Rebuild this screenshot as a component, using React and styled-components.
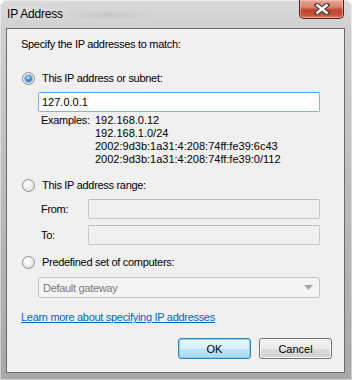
import React from "react";
import styled, { createGlobalStyle } from "styled-components";

const GlobalStyle = createGlobalStyle`
  html, body {
    margin: 0;
    padding: 0;
    background: #ffffff;
  }
  body {
    font-family: "Liberation Sans", Arial, sans-serif;
    font-size: 11px;
    letter-spacing: -0.3px;
    color: #000000;
  }
`;

function Radio({ checked, label }) {
  return (
    <RadioRow>
      <RadioCircle>{checked && <RadioDot />}</RadioCircle>
      <span>{label}</span>
    </RadioRow>
  );
}

export default function App() {
  return (
    <>
      <GlobalStyle />
      <Window>
        <TitleBar>
          <Title>IP Address</Title>
          <CloseButton>
            <svg width="16" height="12" viewBox="0 0 16 12">
              <path d="M3 2 L13 10 M13 2 L3 10" stroke="#3b3b3b" strokeWidth="4.6" strokeLinecap="square" />
              <path d="M3.3 2.3 L12.7 9.7 M12.7 2.3 L3.3 9.7" stroke="#ffffff" strokeWidth="2.4" strokeLinecap="square" />
            </svg>
          </CloseButton>
        </TitleBar>
        <Client>
          <Heading>Specify the IP addresses to match:</Heading>

          <Section $top={19}>
            <Radio checked label="This IP address or subnet:" />
          </Section>
          <TextBox $focused $indent={17} $width={282} $top={6}>
            127.0.0.1
          </TextBox>
          <Examples>
            <span>Examples:</span>
            <ExampleList>
              <div>192.168.0.12</div>
              <div>192.168.1.0/24</div>
              <div>2002:9d3b:1a31:4:208:74ff:fe39:6c43</div>
              <div>2002:9d3b:1a31:4:208:74ff:fe39:0/112</div>
            </ExampleList>
          </Examples>

          <Section $top={12}>
            <Radio label="This IP address range:" />
          </Section>
          <RangeRow $top={6}>
            <RangeLabel>From:</RangeLabel>
            <TextBox $width={232} $disabled />
          </RangeRow>
          <RangeRow $top={6}>
            <RangeLabel>To:</RangeLabel>
            <TextBox $width={232} $disabled />
          </RangeRow>

          <Section $top={10}>
            <Radio label="Predefined set of computers:" />
          </Section>
          <Select>
            <span>Default gateway</span>
            <svg width="9" height="5" viewBox="0 0 9 5">
              <path d="M0 0 H9 L4.5 5 Z" fill="#a6a6a6" />
            </svg>
          </Select>

          <Link href="#">Learn more about specifying IP addresses</Link>

          <ButtonRow>
            <Button $default>OK</Button>
            <Button>Cancel</Button>
          </ButtonRow>
        </Client>
      </Window>
    </>
  );
}

const Window = styled.div`
  width: 352px;
  height: 380px;
  box-sizing: border-box;
  display: flex;
  flex-direction: column;
  padding: 0 7px 7px 6px;
  border-radius: 7px 7px 0 0;
  background:
    radial-gradient(ellipse 45px 6px at 110px 15px, rgba(140, 140, 140, 0.18), transparent),
    linear-gradient(180deg, #dadada 0px, #d0d0d0 30px, #bababa 200px, #a8a8a8 380px);
  box-shadow: inset 0 0 0 1px rgba(255, 255, 255, 0.45);
`;

const TitleBar = styled.div`
  height: 28px;
  display: flex;
  align-items: flex-start;
  flex-shrink: 0;
`;

const Title = styled.div`
  margin: 7px 0 0 1px;
  font-size: 12px;
  letter-spacing: -0.2px;
  line-height: 15px;
  color: #000000;
  text-shadow: 0 0 6px rgba(255, 255, 255, 0.9);
`;

const CloseButton = styled.div`
  margin-left: auto;
  margin-right: 1px;
  width: 45px;
  height: 19px;
  box-sizing: border-box;
  display: flex;
  align-items: center;
  justify-content: center;
  border: 1px solid #5a2018;
  border-top: none;
  border-radius: 0 0 5px 5px;
  background: linear-gradient(180deg, #e8a696 0%, #d9806c 40%, #c2432d 55%, #c4533c 85%, #dc8468 100%);
  box-shadow: inset 0 0 0 1px rgba(255, 210, 200, 0.5);
`;

const Client = styled.div`
  flex: 1;
  display: flex;
  flex-direction: column;
  align-items: flex-start;
  box-sizing: border-box;
  padding: 8px 12px 0 14px;
  background: #f0f0f0;
  border: 1px solid #6a6a6a;
`;

const Heading = styled.div`
  line-height: 15px;
`;

const Section = styled.div`
  margin-top: ${(p) => p.$top}px;
`;

const RadioRow = styled.div`
  display: flex;
  align-items: center;
  gap: 7px;
  margin-left: 1px;
  line-height: 15px;
`;

const RadioCircle = styled.div`
  width: 13px;
  height: 13px;
  box-sizing: border-box;
  border-radius: 50%;
  border: 1px solid #8f9091;
  background: radial-gradient(circle at 40% 35%, #ffffff 0%, #f2f2f2 40%, #d5d5d5 100%);
  display: flex;
  align-items: center;
  justify-content: center;
  flex-shrink: 0;
`;

const RadioDot = styled.div`
  width: 7px;
  height: 7px;
  border-radius: 50%;
  background: radial-gradient(circle at 45% 35%, #c3e3fb 0%, #4b9ae0 40%, #1c5c97 100%);
  box-shadow: 0 0 0 1px rgba(40, 90, 140, 0.35);
`;

const TextBox = styled.div`
  margin-top: ${(p) => p.$top || 0}px;
  margin-left: ${(p) => p.$indent || 0}px;
  width: ${(p) => p.$width}px;
  height: 20px;
  box-sizing: border-box;
  padding: 0 3px;
  letter-spacing: 0;
  line-height: 18px;
  color: #000000;
  background: ${(p) => (p.$disabled ? "#f0f0f0" : "#ffffff")};
  border: 1px solid ${(p) => (p.$focused ? "#7eb4ea" : p.$disabled ? "#c9c9c9" : "#abadb3")};
  border-top-color: ${(p) => (p.$focused ? "#569de5" : p.$disabled ? "#bcbcbc" : "#abadb3")};
  border-radius: 2px;
`;

const Examples = styled.div`
  margin: 2px 0 0 20px;
  display: flex;
  line-height: 13px;
  span {
    width: 54px;
  }
`;

const ExampleList = styled.div`
  display: flex;
  flex-direction: column;
  letter-spacing: 0;
`;

const RangeRow = styled.div`
  margin: ${(p) => p.$top}px 0 0 20px;
  display: flex;
  align-items: center;
`;

const RangeLabel = styled.div`
  width: 47px;
  line-height: 15px;
`;

const Select = styled.div`
  margin: 7px 0 0 17px;
  width: 282px;
  height: 21px;
  box-sizing: border-box;
  padding: 0 6px 0 4px;
  display: flex;
  align-items: center;
  justify-content: space-between;
  color: #7a7a7a;
  background: #f4f4f4;
  border: 1px solid #c2c2c2;
  border-radius: 3px;
`;

const Link = styled.a`
  margin-top: 12px;
  line-height: 15px;
  color: #0066cc;
  text-decoration: underline;
`;

const ButtonRow = styled.div`
  margin-top: 13px;
  align-self: flex-end;
  display: flex;
  gap: 8px;
`;

const Button = styled.div`
  width: 73px;
  height: 21px;
  box-sizing: border-box;
  display: flex;
  align-items: center;
  justify-content: center;
  letter-spacing: 0;
  color: #000000;
  border-radius: 3px;
  border: 1px solid ${(p) => (p.$default ? "#3c7fb1" : "#707070")};
  background: ${(p) =>
    p.$default
      ? "linear-gradient(180deg, #eaf6fd 0%, #d9f0fc 50%, #bee6fd 50%, #a7d9f5 100%)"
      : "linear-gradient(180deg, #f2f2f2 0%, #ebebeb 50%, #dddddd 50%, #cfcfcf 100%)"};
  box-shadow: inset 0 0 0 1px ${(p) => (p.$default ? "#7ad4f8" : "#fcfcfc")};
`;
